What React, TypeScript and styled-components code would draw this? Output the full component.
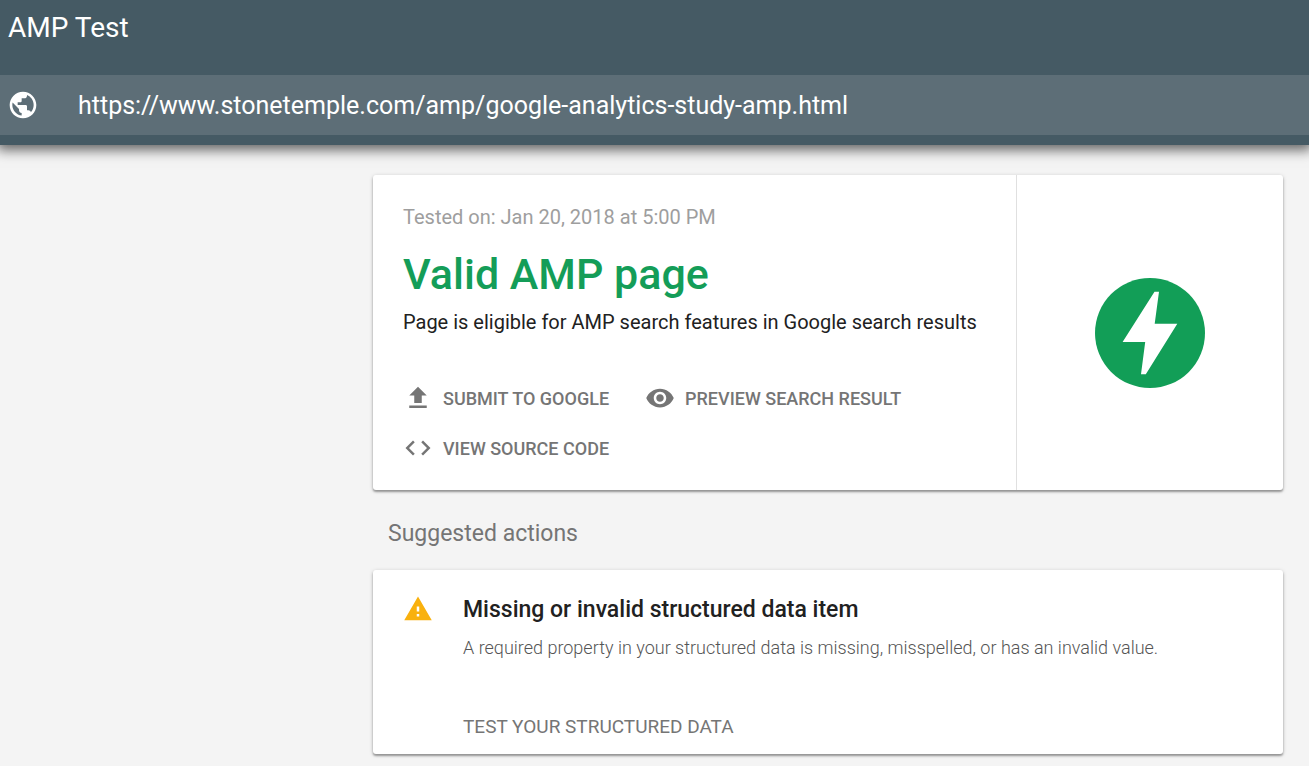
import React from "react";
import styled, { createGlobalStyle } from "styled-components";

const GlobalStyle = createGlobalStyle`
  *, *::before, *::after { box-sizing: border-box; }
  body {
    margin: 0;
    background: #f4f4f4;
    color: #212121;
    font-family: Roboto, "Liberation Sans", sans-serif;
  }
  h1, h2, h3, p { margin: 0; }
`;

const Header = styled.header`
  display: flex;
  flex-direction: column;
  gap: 20px;
  padding-bottom: 10px;
  background: #455a64;
  color: #fff;
  box-shadow: 0 2px 12px 3px rgba(0, 0, 0, 0.6);
`;

const AppTitle = styled.h1`
  padding: 0 8px;
  font-size: 28px;
  font-weight: 400;
  line-height: 55px;
`;

const UrlBar = styled.label`
  display: flex;
  align-items: center;
  gap: 39px;
  height: 60px;
  padding: 0 7px;
  background: #5d6e77;
`;

const UrlInput = styled.input`
  flex: 1;
  min-width: 0;
  padding: 2px 0 0;
  border: 0;
  outline: 0;
  background: transparent;
  color: #fff;
  font-family: inherit;
  font-size: 25px;
  line-height: 30px;
`;

const Main = styled.main`
  width: 100%;
  max-width: 962px;
  margin-left: auto;
  padding: 30px 26px 12px;
`;

const Card = styled.section`
  display: flex;
  border-radius: 3px;
  background: #fff;
  box-shadow: 0 1px 4px rgba(0, 0, 0, 0.2), 0 2px 2px rgba(0, 0, 0, 0.3);
`;

const Result = styled.div`
  flex: 1;
  min-width: 0;
  padding: 30px 30px 17px;
`;

const Badge = styled.div`
  display: flex;
  flex: 0 0 267px;
  align-items: center;
  justify-content: center;
  border-left: 1px solid #e0e0e0;
`;

const TestedOn = styled.p`
  color: #9e9e9e;
  font-size: 20px;
  line-height: 24px;
`;

const Verdict = styled.h2`
  margin-top: 18px;
  color: #149d58;
  font-size: 43px;
  font-weight: 500;
  line-height: 54px;
`;

const Summary = styled.p`
  margin-top: 9px;
  font-size: 20px;
  line-height: 24px;
`;

const Actions = styled.div`
  display: flex;
  flex-wrap: wrap;
  column-gap: 36px;
  margin-top: 39px;
`;

const ActionButton = styled.button<{ $large?: boolean }>`
  display: flex;
  align-items: center;
  gap: 10px;
  height: 50px;
  padding: 0;
  border: 0;
  background: transparent;
  color: #757575;
  font-family: inherit;
  font-size: ${(p) => (p.$large ? 19 : 18)}px;
  font-weight: ${(p) => (p.$large ? 400 : 500)};
  text-transform: uppercase;
  cursor: pointer;
`;

const SectionTitle = styled.h2`
  padding: 28px 15px 20px;
  color: #757575;
  font-size: 23px;
  font-weight: 400;
  line-height: 32px;
`;

const Issue = styled.div`
  display: flex;
  align-items: flex-start;
  gap: 30px;
  padding: 24px 30px 3px;
`;

const IssueTitle = styled.h3`
  font-size: 23px;
  font-weight: 500;
  line-height: 32px;
`;

const IssueText = styled.p`
  margin: 10px 0 41px;
  color: #555;
  font-size: 18px;
  font-weight: 300;
  line-height: 24px;
`;

const Glyph = styled.svg<{ $size: number }>`
  flex: none;
  width: ${(p) => p.$size}px;
  height: ${(p) => p.$size}px;
  fill: currentColor;
`;

const icons = {
  globe:
    "M12 2C6.48 2 2 6.48 2 12s4.48 10 10 10 10-4.48 10-10S17.52 2 12 2zm-1 17.93c-3.95-.49-7-3.85-7-7.93 0-.62.08-1.21.21-1.79L9 15v1c0 1.1.9 2 2 2v1.93zm6.9-2.54c-.26-.81-1-1.39-1.9-1.39h-1v-3c0-.55-.45-1-1-1H8v-2h2c.55 0 1-.45 1-1V7h2c1.1 0 2-.9 2-2v-.41c2.93 1.19 5 4.06 5 7.41 0 2.08-.8 3.97-2.1 5.39z",
  upload: "M9 16h6v-6h4l-7-7-7 7h4zm-4 2h14v2H5z",
  eye: "M12 4.5C7 4.5 2.73 7.61 1 12c1.73 4.39 6 7.5 11 7.5s9.27-3.11 11-7.5c-1.73-4.39-6-7.5-11-7.5zM12 17c-2.76 0-5-2.24-5-5s2.24-5 5-5 5 2.24 5 5-2.24 5-5 5zm0-8c-1.66 0-3 1.34-3 3s1.34 3 3 3 3-1.34 3-3-1.34-3-3-3z",
  code: "M9.4 16.6L4.8 12l4.6-4.6L8 6l-6 6 6 6 1.4-1.4zm5.2 0l4.6-4.6-4.6-4.6L16 6l6 6-6 6-1.4-1.4z",
  warning: "M1 21h22L12 2 1 21zm12-3h-2v-2h2v2zm0-4h-2v-4h2v4z",
};

function Icon({ name, size = 30, color }: { name: keyof typeof icons; size?: number; color?: string }) {
  return (
    <Glyph viewBox="0 0 24 24" $size={size} color={color} aria-hidden="true">
      <path d={icons[name]} />
    </Glyph>
  );
}

export default function App() {
  return (
    <>
      <GlobalStyle />
      <Header>
        <AppTitle>AMP Test</AppTitle>
        <UrlBar>
          <Icon name="globe" size={32} />
          <UrlInput
            type="text"
            aria-label="Page URL"
            defaultValue="https://www.stonetemple.com/amp/google-analytics-study-amp.html"
          />
        </UrlBar>
      </Header>
      <Main>
        <Card>
          <Result>
            <TestedOn>Tested on: Jan 20, 2018 at 5:00 PM</TestedOn>
            <Verdict>Valid AMP page</Verdict>
            <Summary>Page is eligible for AMP search features in Google search results</Summary>
            <Actions>
              <ActionButton type="button">
                <Icon name="upload" />
                Submit to Google
              </ActionButton>
              <ActionButton type="button">
                <Icon name="eye" />
                Preview search result
              </ActionButton>
              <ActionButton type="button">
                <Icon name="code" />
                View source code
              </ActionButton>
            </Actions>
          </Result>
          <Badge>
            <Glyph viewBox="0 0 110 110" $size={110} color="#129e57" aria-label="AMP" role="img">
              <circle cx="55" cy="55" r="55" />
              <path fill="#fff" d="M59.500 13.700H64L59.700 45.700H82.300L50.800 96.300H46L50.200 64H27.600Z" />
            </Glyph>
          </Badge>
        </Card>
        <SectionTitle>Suggested actions</SectionTitle>
        <Card>
          <Issue>
            <Icon name="warning" color="#f9b10e" />
            <div>
              <IssueTitle>Missing or invalid structured data item</IssueTitle>
              <IssueText>
                A required property in your structured data is missing, misspelled, or has an invalid value.
              </IssueText>
              <ActionButton type="button" $large>
                Test your structured data
              </ActionButton>
            </div>
          </Issue>
        </Card>
      </Main>
    </>
  );
}
